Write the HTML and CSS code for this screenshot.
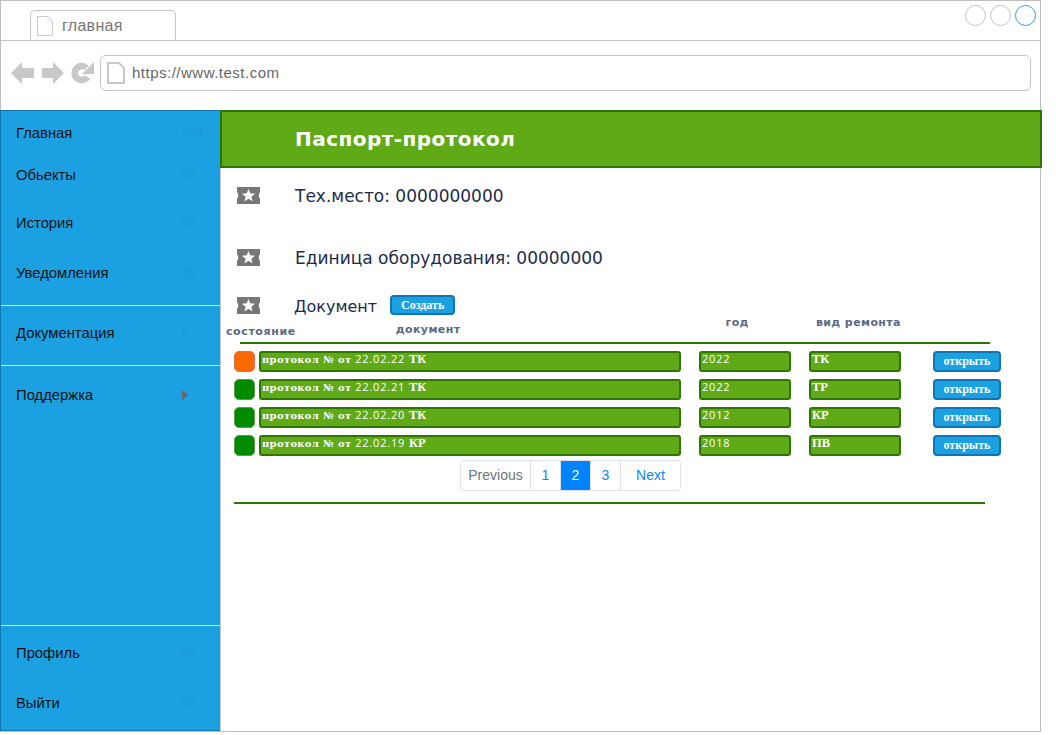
FILE: index.html
```html
<!DOCTYPE html>
<html lang="ru">
<head>
    <meta charset="UTF-8">
    <title>Паспорт-протокол</title>
    <link rel="stylesheet" href="styles.css">
</head>
<body>
    <div class="window">
        <div class="tabbar">
            <div class="tab">
                <svg class="page-icon" width="16" height="20" viewBox="0 0 16 20"><path d="M.5.5H11L15.5 5V19.5H.5Z" fill="#fff" stroke="#c8c8c8"/><path d="M11 .5V5H15.5" fill="none" stroke="#e0e0e0"/></svg>
                <span>главная</span>
            </div>
            <div class="win-buttons">
                <span class="win-btn"></span>
                <span class="win-btn"></span>
                <span class="win-btn win-btn-active"></span>
            </div>
        </div>
        <div class="toolbar">
            <svg class="nav-icon" width="23" height="24" viewBox="0 0 23 24"><path d="M0 12 11 1V7H23V17H11V23Z" fill="#c8c8c8"/></svg>
            <svg class="nav-icon" width="23" height="24" viewBox="0 0 23 24"><path d="M23 12 12 1V7H1V17H12V23Z" fill="#c8c8c8"/></svg>
            <svg class="nav-icon" width="23" height="24" viewBox="0 0 23 24"><path d="M16.5 16A7 7 0 1 1 15.5 7" fill="none" stroke="#c8c8c8" stroke-width="6.5"/><path d="M23 1V13H11Z" fill="#c8c8c8"/></svg>
            <div class="address">
                <svg class="addr-icon" width="18" height="22" viewBox="0 0 18 22"><path d="M1 1H12L17 6V21H1Z" fill="#fff" stroke="#c8c8c8" stroke-width="2"/></svg>
                <span>https://www.test.com</span>
            </div>
        </div>
        <div class="content">
            <aside class="sidebar">
                <div class="nav-group nav-group-top">
                    <div class="nav-item nav-home">Главная<span class="key key-wide">⌘B</span></div>
                    <div class="nav-item nav-objects">Обьекты<span class="key">⌘I</span></div>
                    <div class="nav-item nav-history">История<span class="key">⌘I</span></div>
                    <div class="nav-item nav-notes">Уведомления<span class="key">⌘I</span></div>
                </div>
                <div class="nav-group nav-group-docs">
                    <div class="nav-item nav-docs">Документация<span class="arrow arrow-faint"></span></div>
                </div>
                <div class="nav-group nav-group-support">
                    <div class="nav-item nav-support">Поддержка<span class="arrow"></span></div>
                </div>
                <div class="nav-group nav-group-bottom">
                    <div class="nav-item nav-bottom">Профиль<span class="key">⌘I</span></div>
                    <div class="nav-item nav-bottom">Выйти<span class="key">⌘I</span></div>
                </div>
            </aside>
            <main class="main">
                <h1 class="page-title">Паспорт-протокол</h1>
                <div class="info-row info-place">
                    <svg class="ticket" width="23" height="17" viewBox="0 0 23 17"><path d="M0 0H23V5Q20.5 8.500 23 12V17H0V12Q2.500 8.500 0 5Z" fill="#777"/><path d="M11.500 2 13.300 6.300 18 6.700 14.400 9.700 15.500 14.200 11.500 11.800 7.500 14.200 8.600 9.700 5 6.700 9.700 6.300Z" fill="#fff"/></svg>
                    <span class="info-text">Тех.место: 0000000000</span>
                </div>
                <div class="info-row info-unit">
                    <svg class="ticket" width="23" height="17" viewBox="0 0 23 17"><path d="M0 0H23V5Q20.5 8.500 23 12V17H0V12Q2.500 8.500 0 5Z" fill="#777"/><path d="M11.500 2 13.300 6.300 18 6.700 14.400 9.700 15.500 14.200 11.500 11.800 7.500 14.200 8.600 9.700 5 6.700 9.700 6.300Z" fill="#fff"/></svg>
                    <span class="info-text">Единица оборудования: 00000000</span>
                </div>
                <div class="info-row info-doc">
                    <svg class="ticket" width="23" height="17" viewBox="0 0 23 17"><path d="M0 0H23V5Q20.5 8.500 23 12V17H0V12Q2.500 8.500 0 5Z" fill="#777"/><path d="M11.500 2 13.300 6.300 18 6.700 14.400 9.700 15.500 14.200 11.500 11.800 7.500 14.200 8.600 9.700 5 6.700 9.700 6.300Z" fill="#fff"/></svg>
                    <span class="info-text">Документ</span>
                    <button class="btn btn-create">Создать</button>
                </div>
                <div class="table-head">
                    <span class="th th-state">состояние</span>
                    <span class="th th-doc">документ</span>
                    <span class="th th-year">год</span>
                    <span class="th th-type">вид ремонта</span>
                </div>
                <div class="rows">
                    <div class="row">
                        <span class="status status-warn"></span>
                        <span class="cell cell-doc">протокол № от <i>22.02.22</i> <b>ТК</b></span>
                        <span class="cell cell-year"><i>2022</i></span>
                        <span class="cell cell-type"><b>ТК</b></span>
                        <button class="btn btn-open">открыть</button>
                    </div>
                    <div class="row">
                        <span class="status status-ok"></span>
                        <span class="cell cell-doc">протокол № от <i>22.02.21</i> <b>ТК</b></span>
                        <span class="cell cell-year"><i>2022</i></span>
                        <span class="cell cell-type"><b>ТР</b></span>
                        <button class="btn btn-open">открыть</button>
                    </div>
                    <div class="row">
                        <span class="status status-ok"></span>
                        <span class="cell cell-doc">протокол № от <i>22.02.20</i> <b>ТК</b></span>
                        <span class="cell cell-year"><i>2012</i></span>
                        <span class="cell cell-type"><b>КР</b></span>
                        <button class="btn btn-open">открыть</button>
                    </div>
                    <div class="row">
                        <span class="status status-ok"></span>
                        <span class="cell cell-doc">протокол № от <i>22.02.19</i> <b>КР</b></span>
                        <span class="cell cell-year"><i>2018</i></span>
                        <span class="cell cell-type"><b>ПВ</b></span>
                        <button class="btn btn-open">открыть</button>
                    </div>
                </div>
                <div class="pagination">
                    <a class="page page-prev">Previous</a>
                    <a class="page page-num">1</a>
                    <a class="page page-num page-active">2</a>
                    <a class="page page-num">3</a>
                    <a class="page page-next">Next</a>
                </div>
                <div class="bottom-line"></div>
            </main>
        </div>
    </div>
</body>
</html>
```

FILE: styles.css
```css
body {
    margin: 0;
    background-color: #fff;
    font-family: 'Liberation Sans', Arial, sans-serif;
}

.window {
    width: 1041px;
    height: 732px;
    box-sizing: border-box;
    border: 1px solid #bdbdbd;
    display: flex;
    flex-direction: column;
}

.tabbar {
    height: 40px;
    box-sizing: border-box;
    flex: none;
    border-bottom: 1px solid #c4c4c4;
    display: flex;
    justify-content: space-between;
}

.tab {
    width: 146px;
    height: 30px;
    box-sizing: border-box;
    margin: 9px 0 0 29px;
    border: 1px solid #c4c4c4;
    border-bottom: 0;
    border-radius: 5px 5px 0 0;
    background-color: #fff;
    display: flex;
    align-items: center;
    font-size: 16px;
    letter-spacing: .3px;
    color: #777;
}

.page-icon {
    margin: 0 9px 0 6px;
}

.win-buttons {
    display: flex;
    gap: 4px;
    margin: 4px 4px 0 0;
}

.win-btn {
    width: 21px;
    height: 21px;
    box-sizing: border-box;
    border: 1px solid #c4c4c4;
    border-radius: 50%;
}

.win-btn-active {
    border-color: #2e93f0;
}

.toolbar {
    height: 69px;
    flex: none;
    display: flex;
    align-items: center;
    padding: 0 9px 6px 10px;
    box-sizing: border-box;
}

.nav-icon {
    margin-right: 7px;
    flex: none;
}

.address {
    flex: 1;
    height: 36px;
    box-sizing: border-box;
    margin-left: -1px;
    border: 1px solid #c4c4c4;
    border-radius: 6px;
    display: flex;
    align-items: center;
    padding-left: 6px;
    font-size: 15px;
    color: #666;
    letter-spacing: .5px;
}

.addr-icon {
    margin-right: 7px;
}

.content {
    flex: 1;
    display: flex;
    min-height: 0;
    margin-left: -1px;
}

.sidebar {
    width: 220px;
    flex: none;
    box-sizing: border-box;
    background-color: #1ba1e2;
    border-top: 1px solid #0f76b3;
    border-bottom: 1px solid #0f76b3;
    border-left: 1px solid #0f76b3;
    box-shadow: 1px 2px 0 #c4c4c4;
    display: flex;
    flex-direction: column;
    font-size: 14.8px;
    color: #111;
}

.nav-group-top {
    height: 194px;
}

.nav-group-docs {
    height: 59px;
    border-top: 1px solid #d4eefb;
}

.nav-group-support {
    flex: 1;
    border-top: 1px solid #d4eefb;
    padding-top: 2px;
}

.nav-group-bottom {
    border-top: 1px solid #d4eefb;
    padding: 1px 0 3px;
}

.nav-item {
    display: flex;
    align-items: center;
    justify-content: space-between;
    box-sizing: border-box;
    padding: 2px 23px 0 15px;
}

.nav-home { height: 41px; }
.nav-objects { height: 44px; }
.nav-history { height: 52px; }
.nav-notes { height: 48px; }
.nav-docs { height: 51px; }
.nav-support { height: 52px; }
.nav-bottom { height: 50px; }

.key {
    font-family: 'DejaVu Sans', sans-serif;
    font-size: 14px;
    color: #1b98dd;
}

.key-wide {
    margin-right: -7px;
}

.arrow {
    width: 0;
    height: 0;
    margin-right: 9px;
    border-left: 6px solid #666;
    border-top: 5px solid transparent;
    border-bottom: 5px solid transparent;
}

.arrow-faint {
    border-left-color: #1b98dd;
}

.main {
    flex: 1;
    min-width: 0;
}

.page-title {
    height: 58px;
    box-sizing: border-box;
    margin: 0 -2px 0 0;
    padding: 0 0 0 73px;
    background-color: #60a917;
    border: 2px solid #2d7600;
    font-family: 'DejaVu Sans', sans-serif;
    font-size: 20px;
    letter-spacing: .45px;
    line-height: 55px;
    color: #fff;
}

.info-row {
    display: flex;
    align-items: center;
    padding-left: 17px;
    font-family: 'DejaVu Sans', sans-serif;
    font-size: 17px;
    color: #1c2c4c;
}

.info-text {
    padding-top: 2px;
}

.info-row .ticket {
    margin-right: 35px;
    flex: none;
}

.info-place {
    height: 54px;
}

.info-unit {
    height: 54px;
    margin-top: 8px;
}

.info-doc {
    height: 30px;
    margin: 6px 0 1px;
    font-size: 16px;
}

.info-doc .ticket {
    margin-right: 34px;
}

.btn {
    border: 2px solid #0f76b3;
    border-radius: 4px;
    background-color: #1ba1e2;
    color: #fff;
    padding: 0;
    font-family: 'Liberation Serif', serif;
    font-weight: bold;
    font-size: 12px;
}

.btn-create {
    width: 65px;
    height: 20px;
    margin-left: 13px;
}

.table-head {
    height: 21px;
    border-bottom: 2px solid #2d7600;
    margin: 0 50px 0 20px;
    display: flex;
    font-family: 'DejaVu Sans', sans-serif;
    font-weight: bold;
    font-size: 11px;
    letter-spacing: .4px;
    color: #5a6a85;
}

.th {
    white-space: nowrap;
}

.th-state { margin: 4px 0 0 -14px; letter-spacing: .6px; }
.th-doc { margin: 2px 0 0 100px; }
.th-year { margin: -5px 0 0 265px; }
.th-type { margin: -5px 0 0 67px; }

.rows {
    display: flex;
    flex-direction: column;
    gap: 7px;
    margin: 7px 0 0 14px;
}

.row {
    display: flex;
    height: 21px;
}

.status {
    width: 21px;
    height: 21px;
    box-sizing: border-box;
    border-radius: 5px;
    border: 1px solid #5c9c4f;
}

.status-ok {
    background-color: #008a00;
}

.status-warn {
    background-color: #fa6800;
    border-color: #e0714a;
}

.cell {
    box-sizing: border-box;
    height: 21px;
    border: 2px solid #2d7600;
    border-radius: 3px;
    background-color: #60a917;
    color: #fff;
    padding-left: 1px;
    font-family: 'DejaVu Serif', serif;
    font-weight: bold;
    font-size: 10px;
    line-height: 13px;
    letter-spacing: .3px;
    white-space: nowrap;
}

.cell i {
    font-family: 'Open Sans', sans-serif;
    font-style: normal;
    font-weight: normal;
    font-size: 11px;
    letter-spacing: .8px;
}

.cell b {
    font-family: 'Liberation Serif', serif;
    font-size: 12.5px;
    letter-spacing: 0;
}

.cell-doc {
    width: 422px;
    margin-left: 4px;
    line-height: 11px;
}

.cell-year {
    width: 92px;
    margin-left: 18px;
    line-height: 11px;
}

.cell-type {
    width: 92px;
    margin-left: 18px;
}

.btn-open {
    width: 68px;
    height: 21px;
    margin-left: 32px;
}

.pagination {
    display: flex;
    width: 221px;
    height: 31px;
    box-sizing: border-box;
    margin: 4px 0 0 240px;
    border: 1px solid #dee2e6;
    border-radius: 4px;
    font-size: 14px;
    color: #0a84ff;
}

.page {
    display: flex;
    align-items: center;
    justify-content: center;
    box-sizing: border-box;
    padding-bottom: 2px;
    border-right: 1px solid #dee2e6;
}

.page-prev {
    width: 70px;
    color: #6c757d;
}

.page-num {
    width: 30px;
}

.page-active {
    background-color: #0084ff;
    color: #fff;
}

.page-next {
    flex: 1;
    border-right: 0;
}

.bottom-line {
    height: 2px;
    width: 751px;
    margin: 11px 0 0 14px;
    background-color: #2d7600;
}
```
